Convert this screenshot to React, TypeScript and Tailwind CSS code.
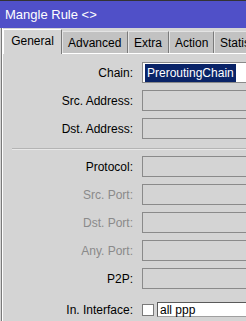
import React from "react";

const tabs = [
  { name: "General", w: "w-[59px]" },
  { name: "Advanced", w: "w-[66px]" },
  { name: "Extra", w: "w-[41px]" },
  { name: "Action", w: "w-[45px]" },
  { name: "Statistics", w: "w-[64px]" },
];

type Row = { label: string; disabled?: boolean };

const topRows: Row[] = [{ label: "Src. Address:" }, { label: "Dst. Address:" }];

const bottomRows: Row[] = [
  { label: "Protocol:" },
  { label: "Src. Port:", disabled: true },
  { label: "Dst. Port:", disabled: true },
  { label: "Any. Port:", disabled: true },
  { label: "P2P:" },
];

function Label({ text, disabled }: { text: string; disabled?: boolean }) {
  return (
    <div
      className={`w-[131px] flex-none text-right pr-px ${disabled ? "text-[#8a8a8a]" : "text-black"}`}
    >
      {text}
    </div>
  );
}

function EmptyField({ label, disabled }: Row) {
  return (
    <div className="flex items-center h-[21px]">
      <Label text={label} disabled={disabled} />
      <div className="ml-[8px] h-[21px] w-[130px] flex-none border border-[#8a8a8a] bg-[#d4d4d4]" />
    </div>
  );
}

export default function App() {
  return (
    <div
      className="w-[246px] h-[321px] overflow-hidden bg-[#d4d4d4] flex flex-col text-[12px] leading-none"
      style={{ fontFamily: '"Liberation Sans", Arial, sans-serif' }}
    >
      <div className="h-[28px] flex-none border-t border-[#333333] bg-[#5050c8] text-white text-[13px] pl-[5px] flex items-center">
        Mangle Rule &lt;&gt;
      </div>

      <div className="flex-1 flex min-h-0">
        <div className="w-px bg-[#d4d4d4]" />
        <div className="w-px bg-[#7a7a7a]" />
        <div className="w-px bg-white" />
        <div className="flex-1 min-w-0 flex flex-col">
          {/* tab strip */}
          <div className="h-[25px] flex-none flex items-end whitespace-nowrap">
            {tabs.map((t, i) =>
              i === 0 ? (
                <div
                  key={t.name}
                  className={`relative z-10 -mb-px h-[25px] ${t.w} flex-none flex items-center justify-center border-l border-t border-white border-r border-r-[#7a7a7a] bg-[#d4d4d4] text-black`}
                >
                  <span className="pb-[2px]">{t.name}</span>
                </div>
              ) : (
                <div
                  key={t.name}
                  className={`h-[22px] ${t.w} flex-none flex items-center pl-[5px] border-l border-t border-[#e4e4e4] border-r border-r-[#7a7a7a] bg-[#c2c2c2] text-black`}
                >
                  {t.name}
                </div>
              )
            )}
          </div>

          {/* panel */}
          <div className="flex-1 border-t border-white pt-[8px] flex flex-col">
            <div className="flex items-center h-[21px]">
              <Label text="Chain:" />
              <div className="ml-[8px] h-[21px] w-[130px] flex-none border border-[#8a8a8a] bg-white flex items-center pl-[2px]">
                <span className="h-[18px] flex items-center bg-[#0a2468] text-white px-[2px]">
                  PreroutingChain
                </span>
              </div>
            </div>
            <div className="flex flex-col gap-[7px] mt-[7px]">
              {topRows.map((r) => (
                <EmptyField key={r.label} {...r} />
              ))}
            </div>

            <div className="mt-[9px] ml-[9px] h-px bg-[#b4b4b4]" />
            <div className="ml-[9px] h-px bg-[#e8e8e8]" />

            <div className="flex flex-col gap-[7px] mt-[6px]">
              {bottomRows.map((r) => (
                <EmptyField key={r.label} {...r} />
              ))}
            </div>

            <div className="flex items-center h-[15px] mt-[13px]">
              <Label text="In. Interface:" />
              <div className="ml-[8px] w-[12px] h-[12px] flex-none border border-[#7a7a7a] bg-white" />
              <div className="ml-[3px] h-[15px] w-[100px] flex-none border border-[#5a5a5a] border-r-[#a0a0a0] border-b-[#a0a0a0] bg-white flex items-center pl-[2px] text-black">
                all ppp
              </div>
            </div>
          </div>
        </div>
      </div>
    </div>
  );
}
